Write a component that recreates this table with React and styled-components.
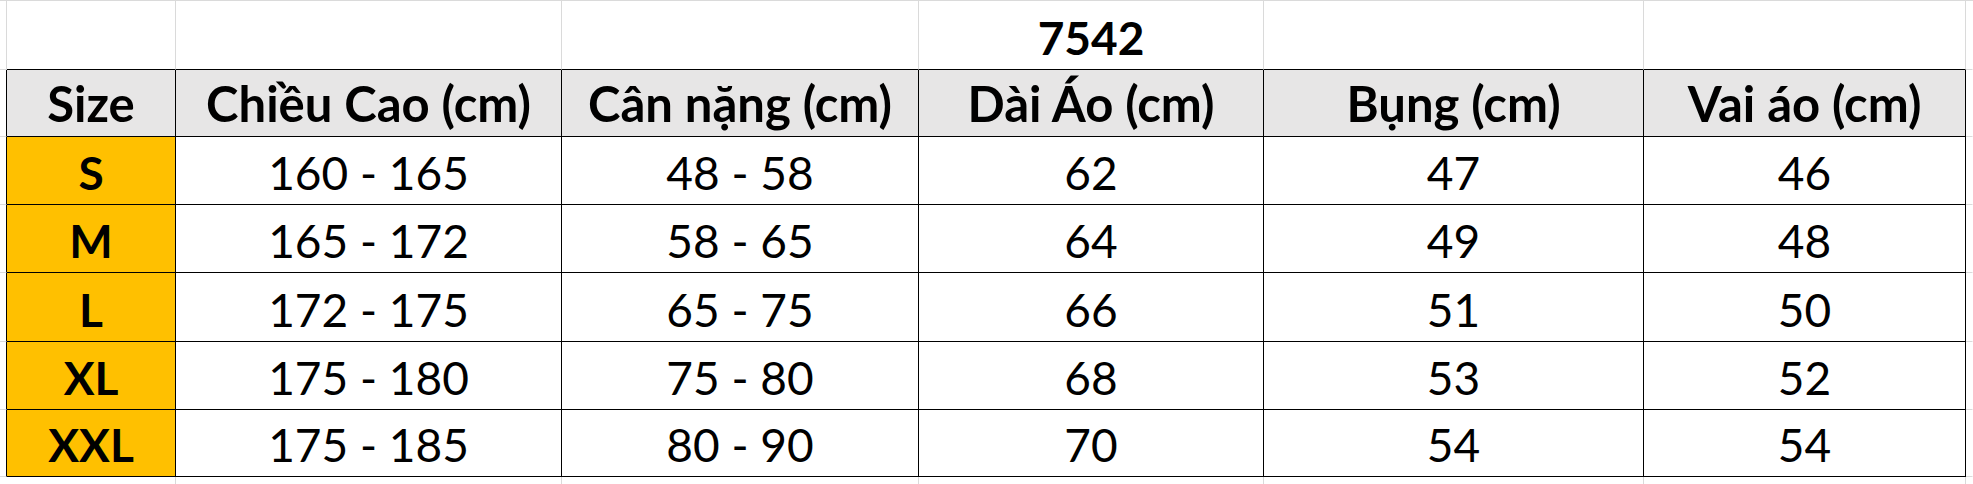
import { Fragment } from "react";
import styled, { createGlobalStyle } from "styled-components";

const GlobalStyle = createGlobalStyle`
  html, body {
    margin: 0;
    padding: 0;
    background: #fff;
  }
  body {
    font-family: Lato, "Liberation Sans", sans-serif;
    color: #000;
  }
`;

const GRID = "#dadada";
const LINE = "#000";

// column widths include the 1px right border of each cell
const COLS = [7, 169, 386, 357, 345, 380, 322];
const ROWS = [69, 67, 68, 68, 69, 68, 67];

const Sheet = styled.div`
  display: grid;
  grid-template-columns: ${COLS.map((c) => c + "px").join(" ")} 1fr;
  grid-template-rows: ${ROWS.map((r) => r + "px").join(" ")} 1fr;
  width: 1973px;
  height: 484px;
  border-top: 1px solid ${GRID};
  box-sizing: border-box;
  overflow: hidden;
`;

const Cell = styled.div`
  box-sizing: border-box;
  display: flex;
  align-items: flex-end;
  justify-content: center;
  padding-bottom: 8px;
  border-right: 1px solid ${(p) => p.$right || "transparent"};
  border-bottom: 1px solid ${(p) => p.$bottom || "transparent"};
  background: ${(p) => p.$bg || "#fff"};
  font-size: ${(p) => p.$size || 46}px;
  line-height: 1;
  font-weight: ${(p) => (p.$bold ? 700 : 400)};
  white-space: nowrap;
`;

const headers = [
  "Size",
  "Chiều Cao (cm)",
  "Cân nặng (cm)",
  "Dài Áo (cm)",
  "Bụng (cm)",
  "Vai áo (cm)",
];

const rows = [
  ["S", "160 - 165", "48 - 58", "62", "47", "46"],
  ["M", "165 - 172", "58 - 65", "64", "49", "48"],
  ["L", "172 - 175", "65 - 75", "66", "51", "50"],
  ["XL", "175 - 180", "75 - 80", "68", "53", "52"],
  ["XXL", "175 - 185", "80 - 90", "70", "54", "54"],
];

export default function App() {
  const table = [headers, ...rows];

  return (
    <>
      <GlobalStyle />
      <Sheet>
        {/* title row */}
        <Cell $right={GRID} $bottom={GRID} />
        {headers.map((_, i) => (
          <Cell key={"t" + i} $right={GRID} $bottom={LINE} $bold>
            {i === 3 ? "7542" : ""}
          </Cell>
        ))}
        <Cell $bottom={GRID} />

        {/* table rows */}
        {table.map((r, ri) => (
          <Fragment key={ri}>
            <Cell $right={LINE} $bottom={GRID} />
            {r.map((v, ci) => (
              <Cell
                key={ci}
                $right={LINE}
                $bottom={LINE}
                $bold={ri === 0 || ci === 0}
                $size={ri === 0 ? 49 : 46}
                $bg={ri === 0 ? "#e7e6e6" : ci === 0 ? "#ffc000" : "#fff"}
              >
                {v}
              </Cell>
            ))}
            <Cell $bottom={GRID} />
          </Fragment>
        ))}

        {/* below the table */}
        <Cell />
        {headers.map((_, i) => (
          <Cell key={"b" + i} $right={GRID} />
        ))}
        <Cell />
      </Sheet>
    </>
  );
}
